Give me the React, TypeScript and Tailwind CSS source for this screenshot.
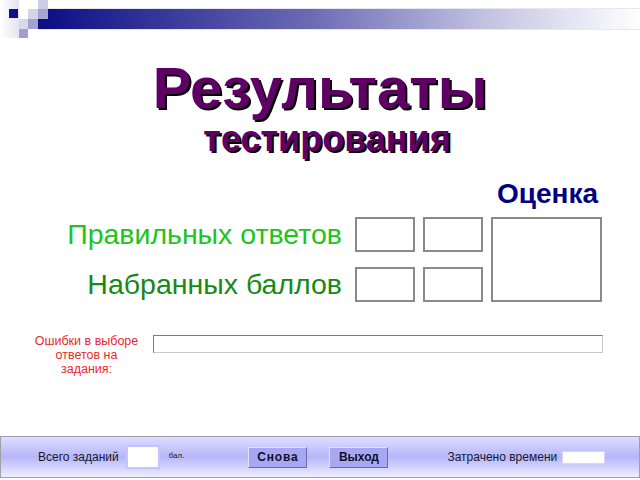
export default function App() {
  return (
    <div className="w-[640px] h-[480px] bg-white flex flex-col overflow-hidden font-['Liberation_Sans',Arial,sans-serif]">
      {/* шапка с квадратами */}
      <svg width="640" height="40" viewBox="0 0 640 40" className="shrink-0">
        <defs>
          <linearGradient id="bar" x1="0" x2="1" y1="0" y2="0">
            <stop offset="0" stopColor="#0c0c84" />
            <stop offset="0.45" stopColor="#6a6ab4" />
            <stop offset="0.75" stopColor="#c4c4e2" />
            <stop offset="1" stopColor="#ffffff" />
          </linearGradient>
          <linearGradient id="side" x1="0" x2="1" y1="0" y2="0">
            <stop offset="0" stopColor="#ffffff" />
            <stop offset="1" stopColor="#e4e4f2" />
          </linearGradient>
        </defs>
        <rect x="0" y="0" width="19" height="38" fill="url(#side)" />
        <rect x="38" y="9" width="602" height="20" fill="url(#bar)" />
        <rect x="38" y="8" width="602" height="1" fill="#e6e6f4" />
        <rect x="38" y="29" width="602" height="1" fill="#e6e6f4" />
        <rect x="9" y="9" width="9" height="9" fill="#10108a" />
        <rect x="38" y="0" width="10" height="9" fill="#cdcde6" />
        <rect x="28" y="9" width="10" height="10" fill="#d4d4e8" />
        <rect x="38" y="9" width="10" height="10" fill="#a6a6d2" />
        <rect x="19" y="19" width="9" height="10" fill="#d8d8ec" />
        <rect x="28" y="19" width="10" height="10" fill="#a2a2d0" />
        <rect x="19" y="29" width="9" height="9" fill="#a0a0cc" />
      </svg>

      {/* заголовок */}
      <div className="mt-[19px] flex flex-col items-center text-[#5e0064] font-bold">
        <div className="text-[58px] leading-none [text-shadow:2px_2px_0_#000]">Результаты</div>
        <div className="mt-[4px] pl-[14px] text-[36px] leading-none [text-shadow:2px_2px_0_#000]">тестирования</div>
      </div>

      <div className="mt-[23px] flex justify-end pr-[42px]">
        <span className="text-[28px] leading-none font-bold text-[#000080]">Оценка</span>
      </div>

      {/* результаты */}
      <div className="mt-[9px] flex">
        <div className="w-[342px] flex flex-col gap-[15px]">
          <div className="h-[35px] flex items-center justify-end text-[28.5px] text-[#1ec41e]">Правильных ответов</div>
          <div className="h-[35px] flex items-center justify-end text-[28.5px] text-[#168a16]">Набранных баллов</div>
        </div>
        <div className="ml-[13px] grid grid-cols-[60px_60px] grid-rows-[35px_35px] gap-x-[8px] gap-y-[15px]">
          <div className="border-2 border-[#8a8a8a] bg-white" />
          <div className="border-2 border-[#8a8a8a] bg-white" />
          <div className="border-2 border-[#8a8a8a] bg-white" />
          <div className="border-2 border-[#8a8a8a] bg-white" />
        </div>
        <div className="ml-[8px] w-[111px] h-[85px] border-2 border-[#8a8a8a] bg-white" />
      </div>

      {/* ошибки */}
      <div className="mt-[32px] flex items-start">
        <div className="ml-[32px] w-[109px] text-center text-[12.5px] leading-[14px] text-[#e8282e]">
          Ошибки в выборе ответов на задания:
        </div>
        <div className="ml-[12px] mt-[1px] w-[450px] h-[18px] border border-[#7a7a7a] border-b-[#c8c8c8] border-r-[#c8c8c8] bg-white" />
      </div>

      {/* нижняя панель */}
      <div className="mt-auto mb-[2px] h-[42px] border border-[#a0a0a8] bg-gradient-to-b from-[#dedeff] via-[#b6b6f8] to-[#eeeeff] flex items-center text-[12px] text-[#181830]">
        <span className="ml-[37px]">Всего заданий</span>
        <div className="ml-[7px] w-[34px] h-[24px] bg-white border-2 border-[#c4c4ff]" />
        <span className="ml-[9px] text-[8px] mb-[2px]">бал.</span>
        <button className="ml-[64px] w-[59px] h-[21px] bg-[#a8a8f2] border border-[#e0e0ff] border-b-[#6a6ab0] border-r-[#6a6ab0] font-bold text-[12px] text-[#10102a] tracking-[0.8px]">
          Снова
        </button>
        <button className="ml-[22px] w-[59px] h-[21px] bg-[#a8a8f2] border border-[#e0e0ff] border-b-[#6a6ab0] border-r-[#6a6ab0] font-bold text-[12px] text-[#10102a]">
          Выход
        </button>
        <span className="ml-[59px]">Затрачено времени</span>
        <div className="ml-[5px] w-[43px] h-[13px] bg-white border border-[#d4d4ff]" />
      </div>
    </div>
  );
}
